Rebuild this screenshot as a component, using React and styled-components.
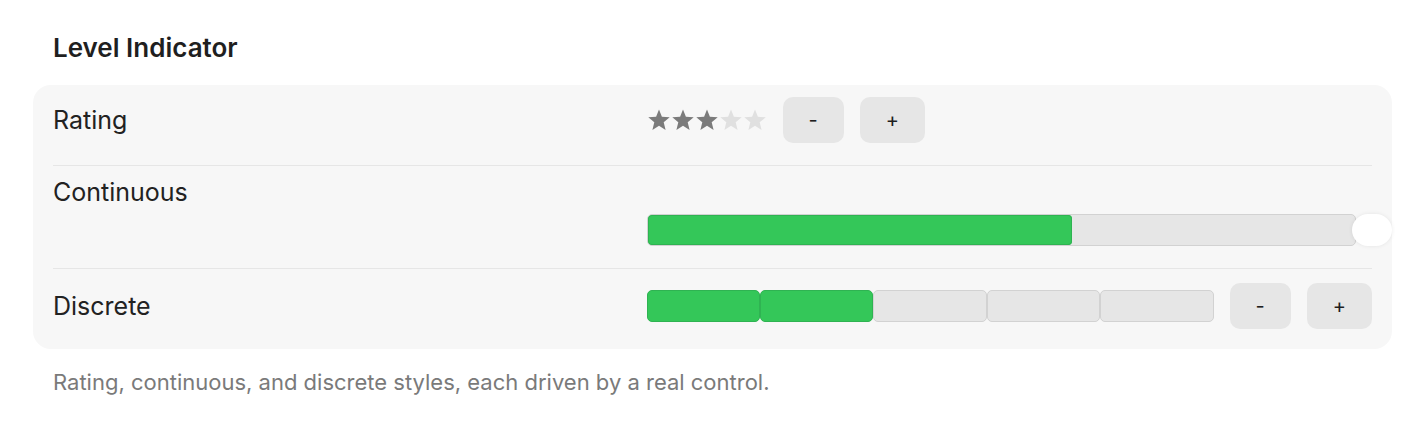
import React, { useState } from "react";
import styled, { createGlobalStyle } from "styled-components";

const GlobalStyle = createGlobalStyle`
  html, body {
    margin: 0;
    padding: 0;
    background: #ffffff;
    font-family: Inter, "Noto Sans", "Liberation Sans", sans-serif;
    color: #1f1f1f;
  }
`;

const Page = styled.div`
  padding: 32px 32px 0 33px;
`;

const Title = styled.h2`
  margin: 0 0 21px;
  padding-left: 20px;
  font-size: 26px;
  line-height: 32px;
  font-weight: 600;
  color: #1f1f1f;
`;

const Card = styled.div`
  background: #f7f7f7;
  border-radius: 18px;
  padding: 0 20px;
`;

const Row = styled.div`
  display: grid;
  grid-template-columns: 45% 1fr;
  align-items: center;
  padding: ${(p) => (p.$last ? "14px 0 20px" : "12px 0 22px")};
  border-bottom: ${(p) => (p.$last ? "none" : "1px solid #e6e6e6")};
`;

const StackRow = styled.div`
  display: grid;
  grid-template-columns: 45% 1fr;
  padding: 12px 0 22px;
  row-gap: 8px;
  border-bottom: 1px solid #e6e6e6;
`;

const Label = styled.div`
  font-size: 25px;
  line-height: 28px;
  color: #222;
  grid-column: 1;
  grid-row: 1;
`;

const Controls = styled.div`
  display: flex;
  align-items: center;
  gap: 16px;
  grid-column: 2;
`;

const Stars = styled.div`
  display: flex;
  align-items: center;
`;

const Button = styled.button`
  height: 46px;
  padding: 0 26px;
  border: none;
  border-radius: 10px;
  background: #e6e6e6;
  font-family: Inter, "Liberation Sans", sans-serif;
  font-size: 20px;
  color: #1f1f1f;
  cursor: pointer;
`;

const BarWrap = styled.div`
  grid-column: 2;
  grid-row: 2;
  position: relative;
  height: 32px;
`;

const Track = styled.div`
  width: calc(100% - 16px);
  height: 32px;
  box-sizing: border-box;
  border: 1px solid #d2d2d2;
  border-radius: 5px;
  background: #e6e6e6;
  overflow: hidden;
`;

const Fill = styled.div`
  height: 100%;
  background: #34c759;
  border-radius: 4px;
  box-shadow: inset 0 0 0 1px #2fb352;
`;

const Thumb = styled.div`
  position: absolute;
  top: 0;
  right: -20px;
  width: 40px;
  height: 32px;
  border-radius: 16px;
  background: #ffffff;
  box-shadow: 0 0 4px rgba(0, 0, 0, 0.08);
`;

const Segments = styled.div`
  flex: 1;
  display: flex;
  height: 32px;
`;

const Segment = styled.div`
  flex: 1;
  box-sizing: border-box;
  border-radius: 5px;
  border: 1px solid ${(p) => (p.$on ? "#2fb352" : "#d2d2d2")};
  background: ${(p) => (p.$on ? "#34c759" : "#e6e6e6")};
`;

const Caption = styled.p`
  margin: 19px 0 0;
  padding-left: 20px;
  font-size: 22px;
  line-height: 28px;
  color: #7a7a7a;
`;

function Star({ on }) {
  return (
    <svg width="24" height="24" viewBox="0 0 24 24">
      <path
        d="M12 1.5l2.9 7.3 7.8.5-6 5 1.9 7.7L12 17.8l-6.6 4.2 1.9-7.7-6-5 7.8-.5z"
        fill={on ? "#7b7b7b" : "#e0e0e0"}
      />
    </svg>
  );
}

export default function App() {
  const [rating, setRating] = useState(3);
  const [level] = useState(0.6);
  const [discrete, setDiscrete] = useState(2);

  return (
    <Page>
      <GlobalStyle />
      <Title>Level Indicator</Title>
      <Card>
        <Row>
          <Label>Rating</Label>
          <Controls>
            <Stars>
              {[1, 2, 3, 4, 5].map((n) => (
                <Star key={n} on={n <= rating} />
              ))}
            </Stars>
            <Button onClick={() => setRating(Math.max(0, rating - 1))}>-</Button>
            <Button onClick={() => setRating(Math.min(5, rating + 1))}>+</Button>
          </Controls>
        </Row>
        <StackRow>
          <Label>Continuous</Label>
          <BarWrap>
            <Track>
              <Fill style={{ width: `${level * 100}%` }} />
            </Track>
            <Thumb />
          </BarWrap>
        </StackRow>
        <Row $last>
          <Label>Discrete</Label>
          <Controls>
            <Segments>
              {[1, 2, 3, 4, 5].map((n) => (
                <Segment key={n} $on={n <= discrete} />
              ))}
            </Segments>
            <Button onClick={() => setDiscrete(Math.max(0, discrete - 1))}>-</Button>
            <Button onClick={() => setDiscrete(Math.min(5, discrete + 1))}>+</Button>
          </Controls>
        </Row>
      </Card>
      <Caption>Rating, continuous, and discrete styles, each driven by a real control.</Caption>
    </Page>
  );
}
